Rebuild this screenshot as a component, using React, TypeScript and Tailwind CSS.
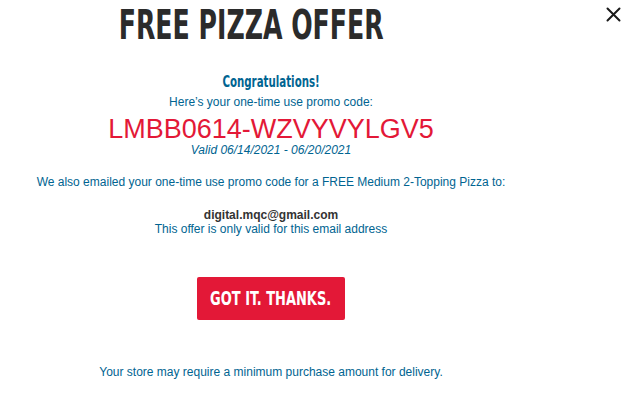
import React from "react";

const blue = "text-[#006491]";
const condensed = "font-['Liberation_Sans_Narrow','DejaVu_Sans_Condensed',sans-serif]";

function App() {
  return (
    <div className="relative h-[401px] w-full overflow-hidden bg-white font-['Liberation_Sans',Arial,sans-serif]">
      <button className="absolute left-[606px] top-[7px] h-[15px] w-[15px]" aria-label="Close">
        <svg viewBox="0 0 15 15" className="h-[15px] w-[15px]">
          <path d="M1.5 1.5 L13.5 13.5 M13.5 1.5 L1.5 13.5" stroke="#1a1a1a" strokeWidth="2" strokeLinecap="round" />
        </svg>
      </button>

      <div className="flex w-[542px] flex-col items-center text-center">
        <h1 className={`mr-[40px] origin-center scale-x-[0.7] whitespace-nowrap pt-[5px] text-[40px] font-bold leading-[40px] text-[#2b2b2b] ${condensed}`}>
          FREE PIZZA OFFER
        </h1>

        <p className={`mt-[30px] origin-center scale-x-[0.76] whitespace-nowrap text-[15px] font-bold leading-[15px] ${blue} ${condensed}`}>
          Congratulations!
        </p>
        <p className={`mt-[5px] text-[12px] leading-[14px] ${blue}`}>
          Here’s your one-time use promo code:
        </p>
        <p className="mt-[7px] text-[27px] leading-[27px] text-[#e31837]">
          LMBB0614-WZVYVYLGV5
        </p>
        <p className={`text-[12px] italic leading-[14px] ${blue}`}>
          Valid 06/14/2021 - 06/20/2021
        </p>

        <p className={`mt-[18px] text-[12px] leading-[14px] ${blue}`}>
          We also emailed your one-time use promo code for a FREE Medium 2-Topping Pizza to:
        </p>

        <p className="mt-[19px] text-[12px] font-bold leading-[14px] text-[#333333]">
          digital.mqc@gmail.com
        </p>
        <p className={`text-[12px] leading-[14px] ${blue}`}>
          This offer is only valid for this email address
        </p>

        <button className="mt-[41px] flex h-[43px] w-[148px] items-center justify-center rounded-[2px] bg-[#e31837]">
          <span className={`origin-center scale-x-[0.76] whitespace-nowrap text-[19px] font-bold leading-[19px] text-white ${condensed}`}>
            GOT IT. THANKS.
          </span>
        </button>

        <p className={`mt-[45px] text-[12px] leading-[14px] ${blue}`}>
          Your store may require a minimum purchase amount for delivery.
        </p>
      </div>
    </div>
  );
}

export default App;
